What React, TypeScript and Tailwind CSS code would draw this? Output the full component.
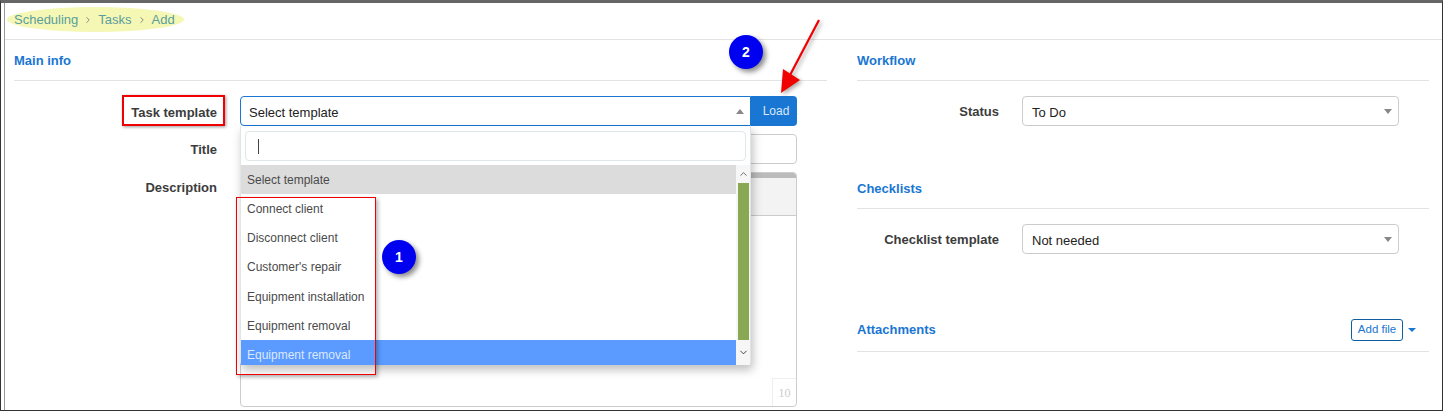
import { ChevronDown, ChevronRight, ChevronUp } from "lucide-react";

const templates = ["Connect client", "Disconnect client", "Customer's repair", "Equipment installation", "Equipment removal"];

function SectionTitle({ title }: { title: string }) {
  return (
    <div className="h-[41px] border-b border-[#e3e3e3] pt-[13px] text-[13px] leading-[15px] font-bold text-[#1976d2]">
      {title}
    </div>
  );
}

function Caret({ up }: { up?: boolean }) {
  return (
    <span
      className={
        up
          ? "h-0 w-0 border-x-[4px] border-b-[5px] border-x-transparent border-b-[#888]"
          : "h-0 w-0 border-x-[4px] border-t-[5px] border-x-transparent border-t-[#888]"
      }
    />
  );
}

function Marker({ n, className }: { n: number; className: string }) {
  return (
    <div
      className={`absolute flex h-[34px] w-[34px] items-center justify-center rounded-full bg-[#0000f0] text-[14px] font-bold text-white shadow-[3px_3px_5px_rgba(0,0,0,0.45)] ${className}`}
    >
      {n}
    </div>
  );
}

function SideSelect({ label, value }: { label: string; value: string }) {
  return (
    <div className="mt-[15px] flex items-center">
      <div className="w-[142px] pt-[1px] text-right text-[13px] font-bold text-[#3c3c3c]">{label}</div>
      <div className="ml-[23px] flex h-[30px] w-[377px] items-center justify-between rounded-[4px] border border-[#ccc] pr-[6px] pl-[9px] text-[13px] text-[#222]">
        <span className="pt-[3px]">{value}</span>
        <Caret />
      </div>
    </div>
  );
}

export default function App() {
  return (
    <div className="relative h-[411px] w-[1443px] overflow-hidden border-x border-b border-[#333] bg-white font-['Liberation_Sans',sans-serif] [border-top:3px_solid_#666]">
      <div className="ml-[3px] h-full border-l border-[#999]">
        {/* Breadcrumbs */}
        <div className="relative h-[37px] border-b border-[#e3e3e3]">
          <div className="absolute top-[4px] left-[2px] h-[25px] w-[177px] rounded-[50%] bg-[#f5f7b4]" />
          <div className="relative flex h-[33px] items-center pl-[9px] text-[13px] text-[#5a9e9e]">
            Scheduling
            <ChevronRight className="mx-[5px] h-[10px] w-[10px] text-[#777]" />
            Tasks
            <ChevronRight className="mx-[5px] h-[10px] w-[10px] text-[#777]" />
            Add
          </div>
        </div>

        <div className="flex pr-[13px] pl-[9px]">
          {/* Main info */}
          <div className="w-[813px]">
            <SectionTitle title="Main info" />
            <div className="mt-[15px] flex h-[30px] items-center">
              <div className="w-[203px] pt-[3px] text-right text-[13px] font-bold text-[#3c3c3c]">Task template</div>
              <div className="ml-[23px] flex h-[30px] w-[557px]">
                <div className="flex flex-1 items-center justify-between rounded-l-[4px] border border-[#1976d2] pr-[6px] pl-[8px] text-[13px] text-[#222]">
                  <span className="pt-[3px]">Select template</span>
                  <Caret up />
                </div>
                <div className="flex w-[46px] items-center justify-center rounded-r-[4px] bg-[#1976d2] pl-[4px] text-[12px] text-[#dbe9f7]">
                  Load
                </div>
              </div>
            </div>
            <div className="mt-[8px] flex h-[30px] items-center">
              <div className="w-[203px] pt-[1px] text-right text-[13px] font-bold text-[#3c3c3c]">Title</div>
              <div className="ml-[23px] h-[30px] w-[557px] rounded-[4px] border border-[#ccc]" />
            </div>
            <div className="mt-[8px] flex">
              <div className="w-[203px] pt-[6px] text-right text-[13px] font-bold text-[#3c3c3c]">Description</div>
              <div className="relative ml-[23px] h-[235px] w-[557px] overflow-hidden rounded-[4px] border border-[#ccc]">
                <div className="h-[5px] bg-[#bbb]" />
                <div className="h-[38px] border-b border-[#ccc] bg-[#f3f3f3]" />
                <div className="absolute right-0 bottom-0 flex h-[28px] w-[24px] items-center justify-center border-t border-l border-[#eee] font-['Liberation_Serif',serif] text-[12px] text-[#ccc]">
                  10
                </div>
              </div>
            </div>
          </div>

          {/* Right column */}
          <div className="ml-[30px] flex-1">
            <SectionTitle title="Workflow" />
            <SideSelect label="Status" value="To Do" />
            <div className="mt-[42px]">
              <SectionTitle title="Checklists" />
            </div>
            <SideSelect label="Checklist template" value="Not needed" />
            <div className="mt-[54px] flex h-[44px] items-center justify-between border-b border-[#e3e3e3]">
              <div className="text-[13px] font-bold text-[#1976d2]">Attachments</div>
              <div className="flex items-center">
                <div className="flex h-[22px] w-[52px] items-center justify-center rounded-[3px] border border-[#0f5fa0] text-[11.5px] text-[#1976d2]">
                  Add file
                </div>
                <span className="mr-[13px] ml-[5px] h-0 w-0 border-x-[4px] border-t-[4px] border-x-transparent border-t-[#1976d2]" />
              </div>
            </div>
          </div>
        </div>
      </div>

      {/* Open dropdown */}
      <div className="absolute top-[123px] left-[239px] h-[239px] w-[511px] rounded-b-[4px] border-x border-[#e0e6e6] bg-white shadow-[2px_5px_10px_rgba(0,0,0,0.25)]">
        <div className="px-[4px] pt-[5px]">
          <div className="flex h-[30px] items-center rounded-[4px] border border-[#dfe7ea] pl-[12px]">
            <div className="h-[15px] w-px bg-[#444]" />
          </div>
        </div>
        <div className="mt-[4px] flex">
          <div className="flex-1 text-[12px] text-[#4a4a4a]">
            <div className="flex h-[29px] items-center bg-[#dcdcdc] pt-[1px] pl-[6px]">Select template</div>
            {templates.map((t) => (
              <div key={t} className="flex h-[29.2px] items-center pt-[1px] pl-[6px]">
                {t}
              </div>
            ))}
            <div className="flex h-[25px] items-center bg-[#5b9aff] pt-[5px] pl-[6px] text-[#dbe9ff]">Equipment removal</div>
          </div>
          <div className="flex h-[200px] w-[14px] flex-col items-center bg-[#f6f6f6] pl-[1px]">
            <ChevronUp className="h-[18px] w-[11px] text-[#666]" />
            <div className="h-[157px] w-[11px] bg-[#89a853]" />
            <ChevronDown className="h-[25px] w-[11px] text-[#333]" />
          </div>
        </div>
      </div>

      {/* Screenshot annotations */}
      <div className="absolute top-[92px] left-[121px] h-[31px] w-[103px] border-2 border-[#f00000] shadow-[1px_1px_3px_rgba(0,0,0,0.4)]" />
      <div className="absolute top-[194px] left-[235px] h-[178px] w-[140px] border border-[#f00000] shadow-[2px_2px_4px_rgba(0,0,0,0.3)]" />
      <Marker n={1} className="top-[237px] left-[381px]" />
      <Marker n={2} className="top-[32px] left-[728px]" />
      <svg className="absolute top-[14px] left-[775px] drop-shadow-[2px_2px_2px_rgba(0,0,0,0.35)]" width="50" height="80" viewBox="0 0 50 80">
        <path d="M43 3 L13 60" stroke="#f00000" strokeWidth="2.2" fill="none" />
        <path d="M5 76 L7 52 L24 63 Z" fill="#f00000" />
      </svg>
    </div>
  );
}
